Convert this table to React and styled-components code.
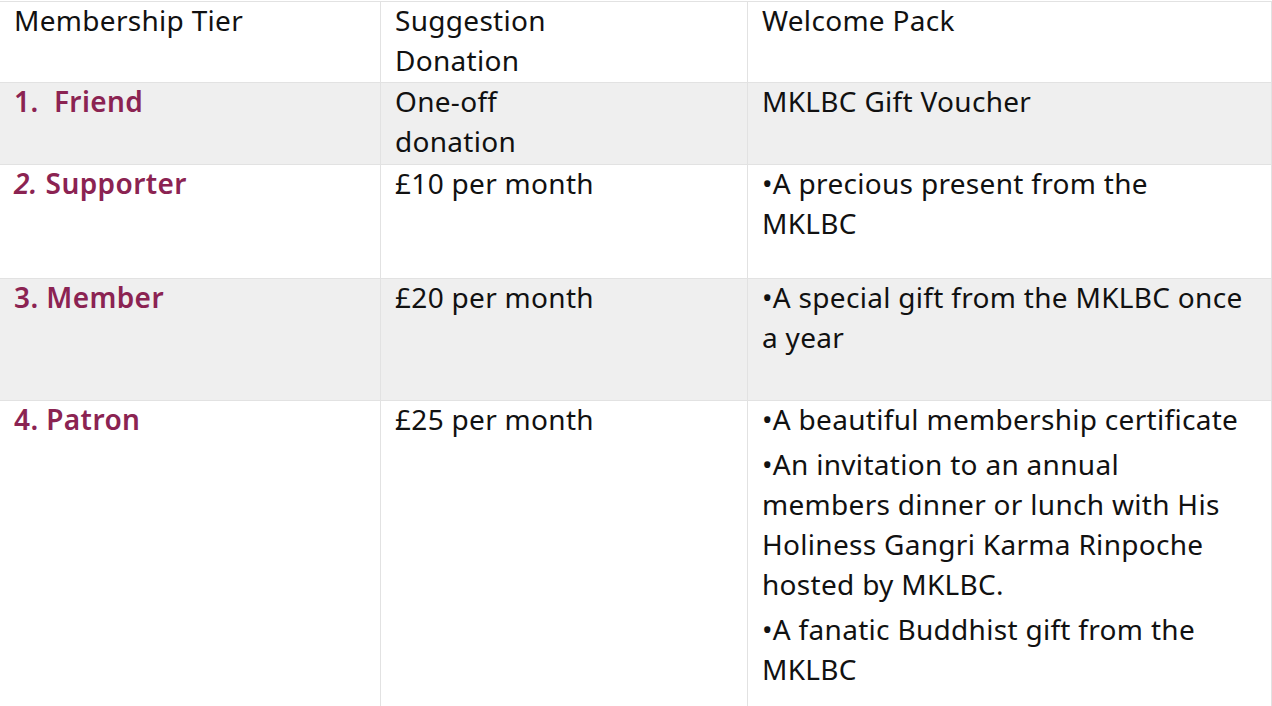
import React from 'react';
import styled, { createGlobalStyle } from 'styled-components';

const GlobalStyle = createGlobalStyle`
  html, body {
    margin: 0;
    padding: 0;
    background: #fff;
  }
  body {
    font-family: "Noto Sans", Lato, sans-serif;
    color: #111;
  }
`;

const Table = styled.table`
  border-collapse: collapse;
  table-layout: fixed;
  width: 1272px;
  margin-top: 1px;
  margin-left: -1px;
`;

const Row = styled.tr`
  height: ${props => props.h}px;
  background: ${props => (props.shaded ? '#efefef' : '#fff')};
`;

const Cell = styled.td`
  vertical-align: top;
  border: 1px solid #e2e2e2;
  padding: 0 8px 0 14px;
  font-size: 28px;
  line-height: 40px;
  letter-spacing: 0.3px;
  color: #111;
  white-space: nowrap;
`;

// pulls the text up a little so the first line sits where the reference does
const Content = styled.div`
  margin-top: -2px;
`;

const Tier = styled.span`
  color: #8b2352;
  font-weight: 600;
  letter-spacing: 0.4px;
  white-space: pre;
`;

const Num = styled.i`
  font-weight: 600;
`;

const Item = styled.p`
  margin: 0 0 5px;
`;

const App = () => {
  return (
    <>
      <GlobalStyle />
      <Table>
        <colgroup>
          <col style={{ width: 381 }} />
          <col style={{ width: 367 }} />
          <col style={{ width: 524 }} />
        </colgroup>
        <tbody>
          <Row h={81}>
            <Cell><Content>Membership Tier</Content></Cell>
            <Cell><Content>Suggestion<br />Donation</Content></Cell>
            <Cell><Content>Welcome Pack</Content></Cell>
          </Row>
          <Row h={82} shaded>
            <Cell><Content><Tier>{'1.  Friend'}</Tier></Content></Cell>
            <Cell><Content>One-off<br />donation</Content></Cell>
            <Cell><Content>MKLBC Gift Voucher</Content></Cell>
          </Row>
          <Row h={114}>
            <Cell><Content><Tier><Num>2.</Num> Supporter</Tier></Content></Cell>
            <Cell><Content>£10 per month</Content></Cell>
            <Cell><Content>•A precious present from the<br />MKLBC</Content></Cell>
          </Row>
          <Row h={122} shaded>
            <Cell><Content><Tier>3. Member</Tier></Content></Cell>
            <Cell><Content>£20 per month</Content></Cell>
            <Cell><Content>•A special gift from the MKLBC once<br />a year</Content></Cell>
          </Row>
          <Row h={320}>
            <Cell><Content><Tier>4. Patron</Tier></Content></Cell>
            <Cell><Content>£25 per month</Content></Cell>
            <Cell>
              <Content>
                <Item>•A beautiful membership certificate</Item>
                <Item>•An invitation to an annual<br />members dinner or lunch with His<br />Holiness Gangri Karma Rinpoche<br />hosted by MKLBC.</Item>
                <Item>•A fanatic Buddhist gift from the<br />MKLBC</Item>
              </Content>
            </Cell>
          </Row>
        </tbody>
      </Table>
    </>
  );
};

export default App;
